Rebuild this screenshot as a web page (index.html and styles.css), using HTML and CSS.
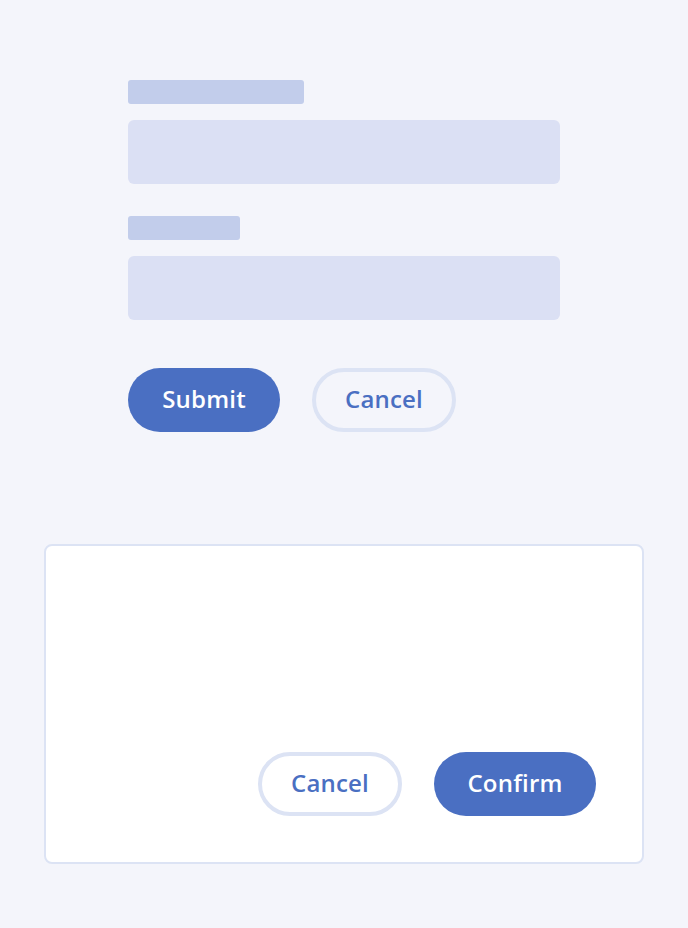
FILE: index.html
```html
<!DOCTYPE html>
<html lang="en">
<head>
  <meta charset="UTF-8" />
  <meta name="viewport" content="width=device-width, initial-scale=1.0" />
  <title>Form Skeleton</title>
  <link rel="stylesheet" href="styles.css">
</head>

<body>
  <main>
    <form class="form">
      <div class="field">
        <div class="label label-long"></div>
        <div class="input"></div>
      </div>
      <div class="field">
        <div class="label label-short"></div>
        <div class="input"></div>
      </div>
      <div class="actions">
        <button type="button" class="btn btn-primary">Submit</button>
        <button type="button" class="btn btn-secondary">Cancel</button>
      </div>
    </form>

    <section class="dialog">
      <div class="actions actions-end">
        <button type="button" class="btn btn-secondary">Cancel</button>
        <button type="button" class="btn btn-primary btn-wide">Confirm</button>
      </div>
    </section>
  </main>
</body>
</html>
```

FILE: styles.css
```css
body {
  margin: 0;
  background: #f4f5fb;
  font-family: 'Open Sans', 'Noto Sans', sans-serif;
}

main {
  padding: 80px 44px 64px;
}

.form {
  margin-left: 84px;
  width: 432px;
}

.field {
  display: flex;
  flex-direction: column;
  gap: 16px;
  margin-bottom: 32px;
}

.label {
  height: 24px;
  border-radius: 3px;
  background: #c2cdeb;
}

.label-long { width: 176px; }
.label-short { width: 112px; }

.input {
  height: 64px;
  border-radius: 6px;
  background: #dbe0f4;
}

.actions {
  display: flex;
  gap: 32px;
  margin-top: 48px;
}

.btn {
  height: 64px;
  padding: 0 0 3px;
  border-radius: 32px;
  font-family: inherit;
  font-size: 24px;
  font-weight: 600;
  letter-spacing: 0.2px;
  cursor: pointer;
}

.btn-primary {
  background: #4a6fc2;
  border: none;
  color: white;
  width: 152px;
}

.btn-secondary {
  background: transparent;
  border: 4px solid #dce3f4;
  color: #4a6fc2;
  width: 144px;
}

.btn-wide { width: 162px; }

.dialog {
  margin-top: 112px;
  width: 600px;
  height: 320px;
  box-sizing: border-box;
  background: white;
  border: 2px solid #dce3f4;
  border-radius: 8px;
  padding: 0 46px 46px;
  display: flex;
  flex-direction: column;
  justify-content: flex-end;
}

.actions-end {
  justify-content: flex-end;
}

.dialog .btn-secondary {
  background: white;
}
```
